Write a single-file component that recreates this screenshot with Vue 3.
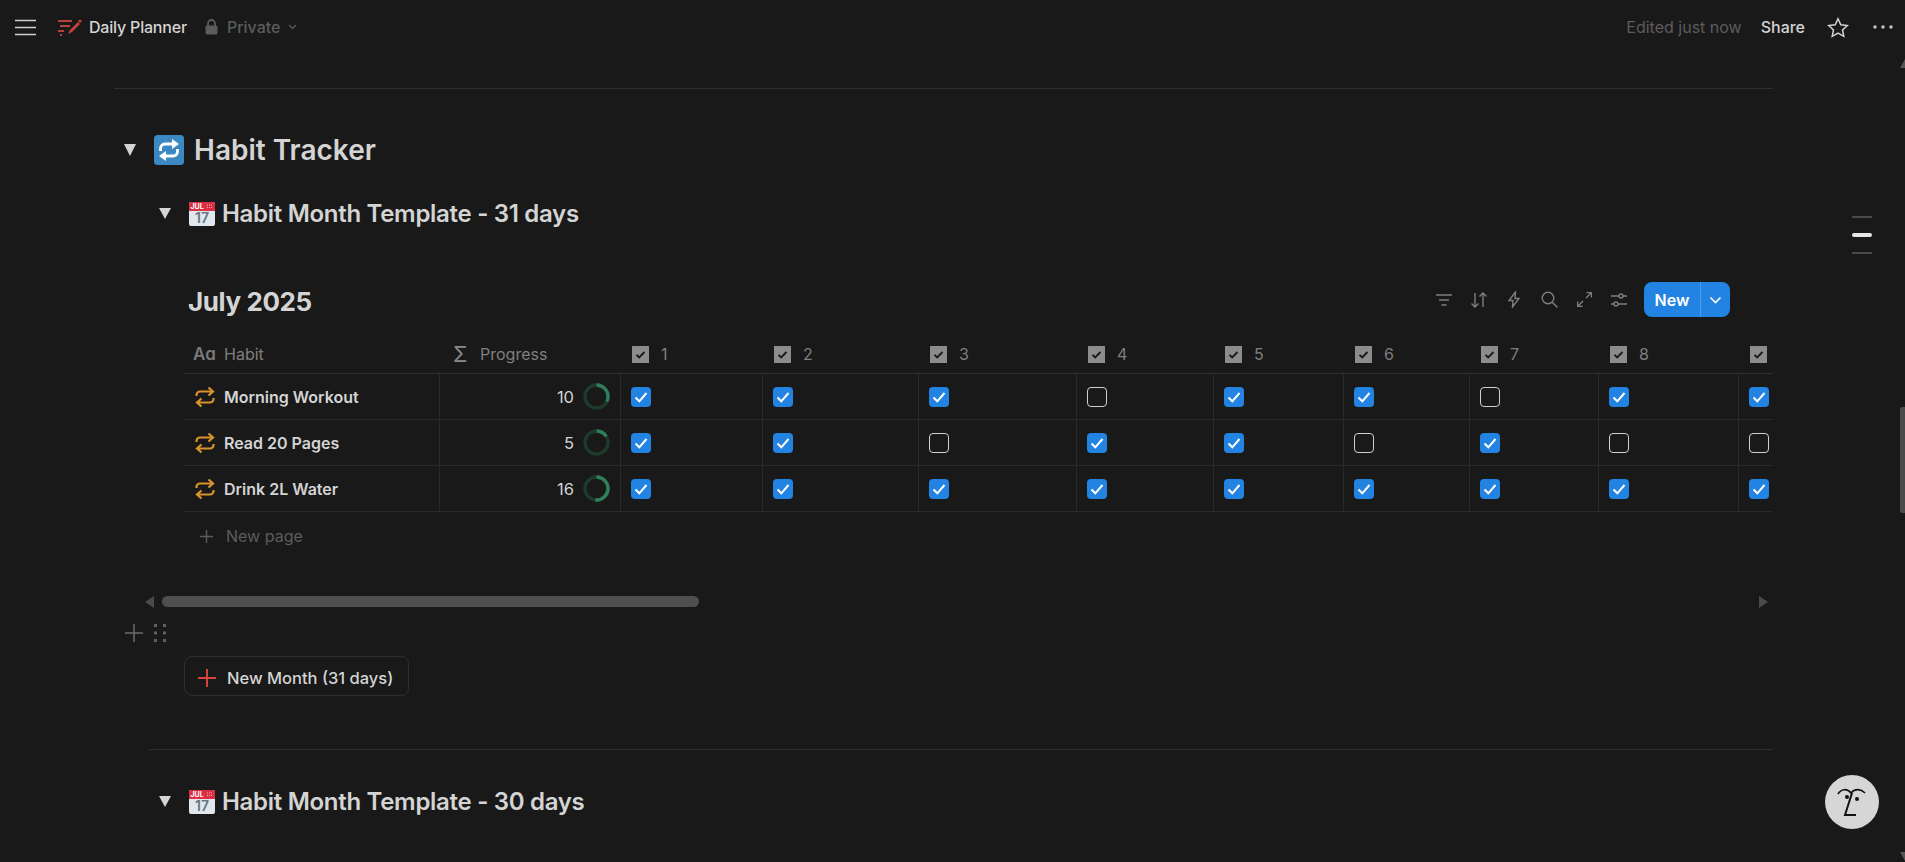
<template>
  <div class="app">
    <header class="topbar">
      <svg class="menu" width="22" height="17" viewBox="0 0 22 17">
        <path d="M0 1.5h21M0 8.5h21M0 15.5h21" stroke="#cfcfcf" stroke-width="1.6" fill="none" />
      </svg>
      <svg class="logo" width="25" height="17" viewBox="0 0 25 17">
        <path d="M1 2h14M3 7h10M1 12h6M3 16h2" stroke="#b8423b" stroke-width="2" fill="none" />
        <path d="M11 15l2-4 8-8 2 2-8 8z" fill="#c4443c" />
        <circle cx="23" cy="2" r="1.6" fill="#c4443c" />
      </svg>
      <span class="page-name">Daily Planner</span>
      <svg class="lock" width="13" height="16" viewBox="0 0 13 16">
        <path d="M3 7V4.5a3.5 3.5 0 0 1 7 0V7" stroke="#5c5c5c" stroke-width="1.8" fill="none" />
        <rect x="0.5" y="6.5" width="12" height="9" rx="1.5" fill="#5c5c5c" />
      </svg>
      <span class="private">Private</span>
      <svg width="9" height="6" viewBox="0 0 9 6" class="private-chevron">
        <path d="M1 1l3.5 3.5L8 1" stroke="#5c5c5c" stroke-width="1.3" fill="none" />
      </svg>
      <div class="topbar-right">
        <span class="edited">Edited just now</span>
        <span class="share">Share</span>
        <svg class="star" width="22" height="21" viewBox="0 0 22 21">
          <path d="M11 1.8l2.8 6 6.500.7-4.800 4.400 1.300 6.400L11 16.100l-5.800 3.200 1.300-6.400-4.800-4.400 6.500-.7z" stroke="#d4d4d4" stroke-width="1.5" fill="none" />
        </svg>
        <svg class="dots" width="20" height="4" viewBox="0 0 20 4">
          <circle cx="2" cy="2" r="1.7" fill="#c8c8c8" />
          <circle cx="10" cy="2" r="1.7" fill="#c8c8c8" />
          <circle cx="18" cy="2" r="1.7" fill="#c8c8c8" />
        </svg>
      </div>
    </header>

    <main class="page">
      <div class="divider first"></div>

      <div class="heading h1">
        <span class="toggle big"></span>
        <svg class="emoji" width="30" height="30" viewBox="0 0 30 30">
          <rect width="30" height="30" rx="3.5" fill="#3b88c3" />
          <path d="M6.500 16v-2.500a4.500 4.500 0 0 1 4.500-4.500h9M23.500 14v2.500a4.500 4.500 0 0 1-4.500 4.500h-9" stroke="#fff" stroke-width="2.800" fill="none" />
          <path d="M18 4l7 5-7 5zM12 16l-7 5 7 5z" fill="#fff" />
        </svg>
        <span>Habit Tracker</span>
      </div>

      <section class="nested">
        <div class="heading h2">
          <span class="toggle"></span>
          <svg class="emoji cal" width="26" height="25" viewBox="0 0 26 25">
            <rect y="1" width="26" height="24" rx="2" fill="#e1e8ed" />
            <path d="M0 10V3a2 2 0 0 1 2-2h22a2 2 0 0 1 2 2v7z" fill="#dd2e44" />
            <text x="1.500" y="8" class="cal-month">JUL</text>
            <path d="M18 4h6M18 6.500h6" stroke="#f4abba" stroke-width="1.2" stroke-dasharray="1 1" />
            <text x="13" y="22" class="cal-day">17</text>
          </svg>
          <span>Habit Month Template - 31 days</span>
        </div>

        <div class="db">
          <div class="db-head">
            <h2 class="db-title">July 2025</h2>
            <div class="toolbar">
              <svg width="16" height="12" viewBox="0 0 16 12" class="tool filter">
                <path d="M0 1h16M3 6h10M5.500 11h5" />
              </svg>
              <svg width="16" height="16" viewBox="0 0 16 16" class="tool sort">
                <path d="M4 1v14M0.500 11.500L4 15l3.500-3.500M12 15V1M8.500 4.500L12 1l3.500 3.500" />
              </svg>
              <svg width="12" height="17" viewBox="0 0 12 17" class="tool bolt">
                <path d="M7.500 1L1 9.500h4L4.500 16 11 7.500H7z" />
              </svg>
              <svg width="17" height="17" viewBox="0 0 17 17" class="tool search">
                <circle cx="7" cy="7" r="5.800" />
                <path d="M11.200 11.200L16.500 16.500" />
              </svg>
              <svg width="15" height="15" viewBox="0 0 15 15" class="tool expand">
                <path d="M9 6l5.500-5.500M9.500.6h5v5M6 9L.6 14.400M.6 9.500v5h5" />
              </svg>
              <svg width="16" height="14" viewBox="0 0 16 14" class="tool sliders">
                <path d="M0 3h8M12 3h4M0 11h3M7 11h9" />
                <circle cx="10" cy="3" r="2" />
                <circle cx="5" cy="11" r="2" />
              </svg>
              <div class="new-btn">
                <span class="new-label">New</span>
                <span class="new-arrow">
                  <svg width="13" height="8" viewBox="0 0 13 8">
                    <path d="M1.500 1.500l5 5 5-5" stroke="#fff" stroke-width="1.600" fill="none" />
                  </svg>
                </span>
              </div>
            </div>
          </div>

          <div class="table">
            <div class="row header">
              <div class="cell name-head"><span class="aa">Aɑ</span><span>Habit</span></div>
              <div class="cell progress-head"><span class="sigma">Σ</span><span>Progress</span></div>
              <div v-for="d in days" :key="d" class="cell day-head">
                <svg width="17" height="17" viewBox="0 0 17 17">
                  <rect width="17" height="17" fill="#8c8c8c" />
                  <path d="M4.500 8.800l2.700 2.700 5.300-5.500" stroke="#191919" stroke-width="1.900" fill="none" />
                </svg>
                <span v-if="d < 9">{{ d }}</span>
              </div>
            </div>

            <div v-for="h in habits" :key="h.name" class="row">
              <div class="cell name">
                <svg width="20" height="22" viewBox="0 0 20 22">
                  <path d="M1.500 10V9a3.500 3.500 0 0 1 3.500-3.500H17M13.500 1.500L18 5.500l-4.500 4M18.500 12v1a3.500 3.500 0 0 1-3.500 3.500H3M6.500 12.500L2 16.500l4.500 4" stroke="#d9932b" stroke-width="2.200" fill="none" />
                </svg>
                <span>{{ h.name }}</span>
              </div>
              <div class="cell progress">
                <span>{{ h.done }}</span>
                <svg width="27" height="27" viewBox="0 0 27 27" class="ring">
                  <circle cx="13.500" cy="13.500" r="11.500" stroke="#1e3a2c" stroke-width="3.400" fill="none" />
                  <circle
                    cx="13.500"
                    cy="13.500"
                    r="11.500"
                    stroke="#2f7f5a"
                    stroke-width="3.400"
                    fill="none"
                    pathLength="31"
                    :stroke-dasharray="`${h.done} 31`"
                    transform="rotate(-90 13.500 13.500)"
                  />
                </svg>
              </div>
              <div v-for="(c, i) in h.checks" :key="i" class="cell check">
                <span v-if="c" class="box on">
                  <svg width="14" height="12" viewBox="0 0 14 12">
                    <path d="M1.500 6.500l3.800 3.800 7.200-8.300" stroke="#fff" stroke-width="2" fill="none" />
                  </svg>
                </span>
                <span v-else class="box"></span>
              </div>
            </div>
          </div>

          <div class="new-page">
            <svg width="13" height="13" viewBox="0 0 13 13">
              <path d="M6.500 0v13M0 6.500h13" stroke="#5c5c5c" stroke-width="1.400" />
            </svg>
            <span>New page</span>
          </div>

          <div class="hscroll">
            <span class="arrow left"></span>
            <div class="track"><div class="thumb"></div></div>
            <span class="arrow right"></span>
          </div>

          <div class="handles">
            <svg width="18" height="18" viewBox="0 0 18 18">
              <path d="M9 0v18M0 9h18" stroke="#6b6b6b" stroke-width="1.500" />
            </svg>
            <svg width="12" height="18" viewBox="0 0 12 18" class="grip">
              <g fill="#5f5f5f">
                <rect x="0" y="0" width="3" height="3" />
                <rect x="9" y="0" width="3" height="3" />
                <rect x="0" y="7.500" width="3" height="3" />
                <rect x="9" y="7.500" width="3" height="3" />
                <rect x="0" y="15" width="3" height="3" />
                <rect x="9" y="15" width="3" height="3" />
              </g>
            </svg>
          </div>

          <div class="month-btn">
            <svg width="18" height="18" viewBox="0 0 18 18">
              <path d="M9 0v18M0 9h18" stroke="#d4453f" stroke-width="2" />
            </svg>
            <span>New Month (31 days)</span>
          </div>
        </div>

        <div class="divider second"></div>

        <div class="heading h2 last">
          <span class="toggle"></span>
          <svg class="emoji cal" width="26" height="25" viewBox="0 0 26 25">
            <rect y="1" width="26" height="24" rx="2" fill="#e1e8ed" />
            <path d="M0 10V3a2 2 0 0 1 2-2h22a2 2 0 0 1 2 2v7z" fill="#dd2e44" />
            <text x="1.500" y="8" class="cal-month">JUL</text>
            <path d="M18 4h6M18 6.500h6" stroke="#f4abba" stroke-width="1.2" stroke-dasharray="1 1" />
            <text x="13" y="22" class="cal-day">17</text>
          </svg>
          <span>Habit Month Template - 30 days</span>
        </div>
      </section>
    </main>

    <div class="outline">
      <span></span>
      <span class="current"></span>
      <span></span>
    </div>

    <div class="page-scroll">
      <span class="up"></span>
      <span class="bar"></span>
      <span class="down"></span>
    </div>

    <div class="help">
      <svg width="34" height="36" viewBox="0 0 34 36">
        <path d="M3 10c3-5 9-6 13-1 4-5 10-4 14 0" stroke="#111" stroke-width="1.700" fill="none" />
        <circle cx="12" cy="13" r="2" fill="#111" />
        <circle cx="22" cy="15" r="2" fill="#111" />
        <path d="M17 9L10 31h11" stroke="#111" stroke-width="2" fill="none" />
      </svg>
    </div>
  </div>
</template>

<script setup>
const days = [1, 2, 3, 4, 5, 6, 7, 8, 9]

const habits = [
  { name: 'Morning Workout', done: 10, checks: [1, 1, 1, 0, 1, 1, 0, 1, 1] },
  { name: 'Read 20 Pages', done: 5, checks: [1, 1, 0, 1, 1, 0, 1, 0, 0] },
  { name: 'Drink 2L Water', done: 16, checks: [1, 1, 1, 1, 1, 1, 1, 1, 1] },
]
</script>

<style scoped>
.app {
  position: relative;
  height: 862px;
  overflow: hidden;
  background: #191919;
  color: #d4d4d4;
  font-family: Inter, 'Liberation Sans', sans-serif;
}

.topbar {
  display: flex;
  align-items: center;
  height: 54px;
  padding: 0 12px 0 15px;
  font-size: 16px;
}
.logo {
  margin-left: 20px;
}
.page-name {
  margin-left: 7px;
  font-weight: 500;
  letter-spacing: -0.2px;
}
.lock {
  margin-left: 18px;
}
.private {
  margin-left: 9px;
  color: #5c5c5c;
  font-weight: 500;
}
.private-chevron {
  margin-left: 8px;
}
.topbar-right {
  display: flex;
  align-items: center;
  margin-left: auto;
}
.edited {
  color: #5c5c5c;
}
.share {
  margin-left: 19px;
  font-weight: 500;
}
.star {
  margin-left: 22px;
}
.dots {
  margin-left: 24px;
}

.page {
  padding: 0 132px 0 114px;
}
.divider {
  height: 1px;
  background: #2f2f2f;
}
.divider.first {
  margin-top: 34px;
}
.divider.second {
  margin-top: 53px;
}

.heading {
  display: flex;
  align-items: center;
  height: 40px;
  font-weight: 600;
}
.h1 {
  margin-top: 41px;
  font-size: 28px;
}
.h1 .emoji {
  margin: 0 10px 0 18px;
}
.h2 {
  margin-top: 23px;
  font-size: 24px;
  letter-spacing: -0.3px;
}
.h2.last {
  margin-top: 31px;
}
.h2 .emoji {
  margin: 0 7px 0 18px;
}
.toggle {
  width: 0;
  height: 0;
  margin-left: 10px;
  border-top: 11px solid #d4d4d4;
  border-left: 6.5px solid transparent;
  border-right: 6.5px solid transparent;
}
.toggle.big {
  border-top-width: 12px;
}
.cal-month {
  font: 700 7px Inter, sans-serif;
  letter-spacing: 0;
  fill: #fff;
}
.cal-day {
  font: 600 14px Inter, sans-serif;
  letter-spacing: 0;
  fill: #66757f;
  text-anchor: middle;
}

.nested {
  margin-left: 35px;
}
.db {
  margin-left: 35px;
}
.db-head {
  display: flex;
  justify-content: space-between;
  align-items: flex-start;
  height: 53px;
  margin-top: 49px;
  padding-right: 43px;
}
.db-title {
  margin: 0;
  padding-left: 4px;
  font-size: 26px;
  line-height: 40px;
  font-weight: 700;
  letter-spacing: -0.4px;
}
.toolbar {
  display: flex;
  align-items: center;
  height: 35px;
}
.tool {
  fill: none;
  stroke: #7f7f7f;
  stroke-width: 1.4;
}
.sort,
.expand,
.sliders {
  margin-left: 19px;
}
.bolt,
.search {
  margin-left: 21px;
}
.new-btn {
  display: flex;
  height: 35px;
  margin-left: 17px;
  border-radius: 8px;
  background: #2383e2;
  color: #fff;
  font-size: 16px;
  font-weight: 600;
}
.new-label {
  display: flex;
  align-items: center;
  justify-content: center;
  width: 56px;
  border-right: 1px solid rgba(255, 255, 255, 0.2);
}
.new-arrow {
  display: flex;
  align-items: center;
  justify-content: center;
  width: 29px;
}

.table {
  overflow: hidden;
  font-size: 16px;
}
.row {
  display: grid;
  grid-template-columns: 255px 181px 142px 156px 158px 137px 130px 126px 129px 140px 140px;
  width: 1700px;
  height: 46px;
  box-sizing: border-box;
  border-bottom: 1px solid #2a2a2a;
}
.row.header {
  height: 39px;
  border-bottom-color: #2f2f2f;
  color: #7f7f7f;
}
.cell {
  display: flex;
  align-items: center;
  box-sizing: border-box;
}
.row:not(.header) .cell + .cell {
  border-left: 1px solid #2a2a2a;
}
.name-head {
  padding-left: 9px;
}
.aa {
  width: 31px;
  font-size: 17px;
  font-weight: 600;
  color: #7a7a7a;
}
.progress-head {
  padding-left: 14px;
}
.sigma {
  width: 27px;
  font-size: 21px;
  color: #8a8a8a;
}
.day-head {
  padding-left: 12px;
}
.day-head span {
  margin-left: 12px;
}
.name {
  padding-left: 11px;
  font-weight: 600;
  color: #d4d4d4;
}
.name span {
  margin-left: 9px;
}
.progress {
  justify-content: flex-end;
  padding-right: 10px;
  font-size: 16.5px;
}
.ring {
  margin-left: 9px;
}
.check {
  padding-left: 10px;
}
.box {
  display: flex;
  align-items: center;
  justify-content: center;
  width: 20px;
  height: 20px;
  box-sizing: border-box;
  border: 1.5px solid #cfcfcf;
  border-radius: 4px;
}
.box.on {
  border: none;
  background: #2383e2;
}

.new-page {
  display: flex;
  align-items: center;
  height: 46px;
  box-sizing: border-box;
  padding: 2px 0 0 16px;
  color: #5c5c5c;
  font-size: 16px;
}
.new-page span {
  margin-left: 13px;
}

.hscroll {
  display: flex;
  align-items: center;
  height: 11px;
  margin: 38px 5px 0 -39px;
}
.arrow {
  width: 0;
  height: 0;
  border-top: 6px solid transparent;
  border-bottom: 6px solid transparent;
}
.arrow.left {
  border-right: 9px solid #4a4a4a;
}
.arrow.right {
  border-left: 9px solid #4a4a4a;
}
.track {
  flex: 1;
  margin: 0 8px;
}
.thumb {
  width: 537px;
  height: 11px;
  border-radius: 6px;
  background: #4f4f4f;
}

.handles {
  display: flex;
  align-items: center;
  height: 18px;
  margin: 17px 0 0 -59px;
}
.grip {
  margin-left: 11px;
}

.month-btn {
  display: inline-flex;
  align-items: center;
  height: 40px;
  margin-top: 14px;
  padding: 4px 15px 0 13px;
  box-sizing: border-box;
  border: 1px solid #2f2f2f;
  border-radius: 8px;
  font-size: 16.5px;
  font-weight: 500;
}
.month-btn span {
  margin-left: 11px;
}

.outline {
  position: absolute;
  top: 216px;
  left: 1852px;
  display: flex;
  flex-direction: column;
  gap: 15px;
  width: 20px;
}
.outline span {
  height: 2px;
  background: #4a4a4a;
}
.outline .current {
  height: 4px;
  border-radius: 2px;
  background: #e6e6e6;
}

.page-scroll span {
  position: absolute;
  right: 0;
}
.page-scroll .bar {
  top: 407px;
  width: 5px;
  height: 106px;
  border-radius: 2px 0 0 2px;
  background: #4a4a4a;
}
.page-scroll .up {
  top: 59px;
  border-bottom: 9px solid #555;
  border-left: 5px solid transparent;
}
.page-scroll .down {
  bottom: 1px;
  border-top: 9px solid #555;
  border-left: 5px solid transparent;
}

.help {
  position: absolute;
  right: 26px;
  bottom: 33px;
  display: flex;
  align-items: center;
  justify-content: center;
  width: 54px;
  height: 54px;
  border-radius: 50%;
  background: #d6d6d6;
}
</style>

<style>
html,
body {
  background: #191919;
  overflow: hidden;
}
</style>
